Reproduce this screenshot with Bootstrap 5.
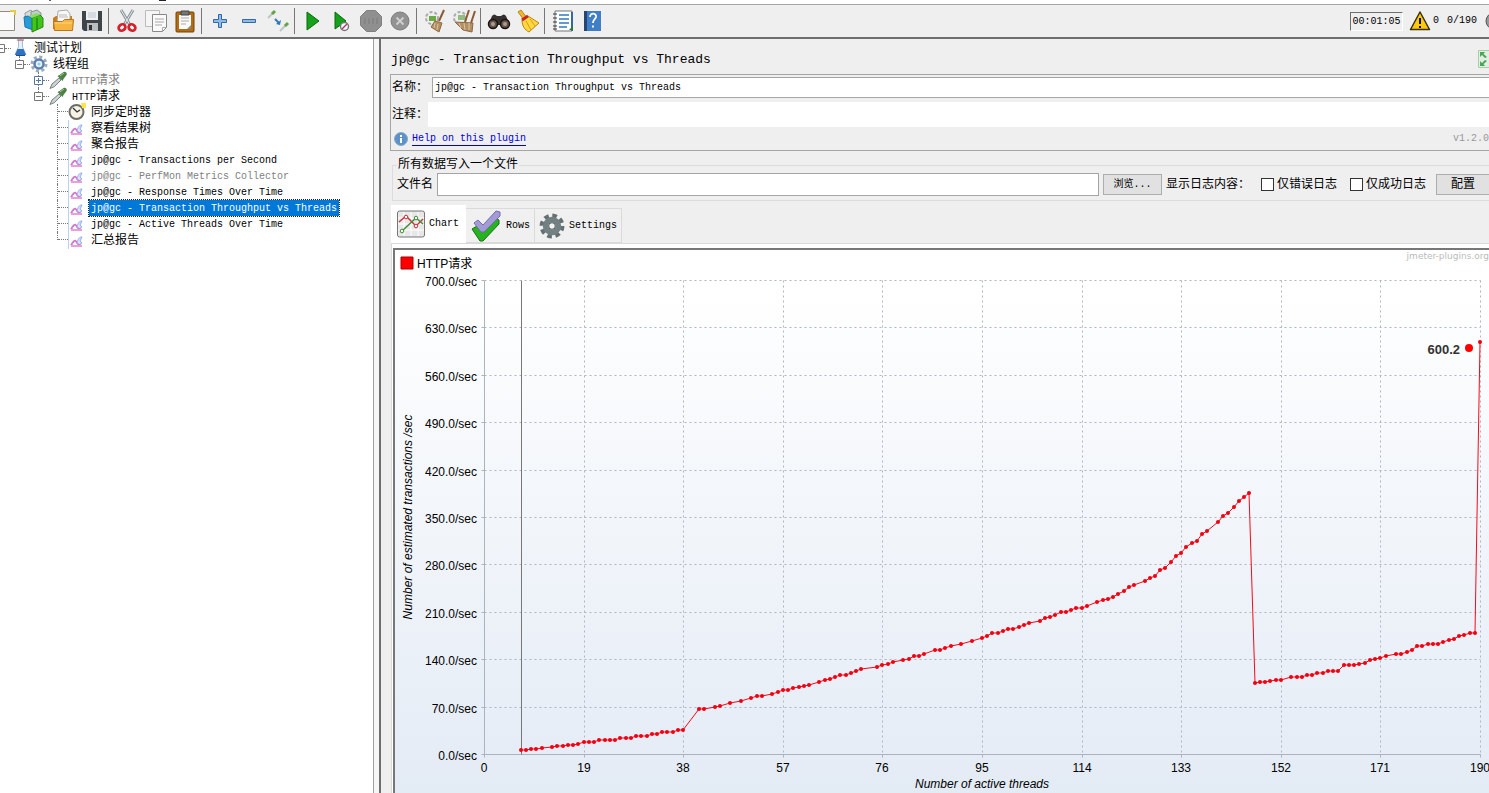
<!DOCTYPE html>
<html lang="zh-CN">
<head>
<meta charset="utf-8">
<meta name="viewport" content="width=device-width, initial-scale=1">
<title>Apache JMeter</title>
<link href="https://cdn.jsdelivr.net/npm/bootstrap@5.3.0/dist/css/bootstrap.min.css" rel="stylesheet">
<script src="https://cdn.jsdelivr.net/npm/bootstrap@5.3.0/dist/js/bootstrap.bundle.min.js"></script>
<style>
  :root { --face:#efefef; --edge:#a5a5a5; --dark:#6e6e6e; }
  body { font-family:"Liberation Mono","Noto Sans CJK SC",monospace; font-size:12px; line-height:16px; color:#000; background:var(--face); }
  .mono { font-size:10px; }
  .menu-edge { height:4px; background:#fff; }
  .menu-edge svg { display:block; }
  .toolbar { height:35px; background:var(--face); border-top:1px solid var(--edge); border-bottom:2px solid var(--dark); }
  .tools { margin-left:-10px; }
  .tool { width:29px; height:30px; padding:0; border:0; background:none; display:flex; align-items:center; justify-content:center; }
  .tool svg { width:24px; height:24px; }
  .divider { width:1px; height:26px; margin:0 3px 0 2px; background:#777; }
  .clock { width:53px; height:19px; line-height:18px; text-align:center; border:1px solid; border-color:#6e6e6e #fff #fff #6e6e6e; }
  .side { width:374px; flex:none; background:#fff; border-right:1px solid #a0a0a0; overflow:hidden; }
  .tree, .tree ul { list-style:none; margin:0; padding:0; }
  .tree { margin:1px 0 0 -4px; }
  .tree ul { padding-left:19px; }
  .node { display:flex; height:16px; align-items:center; white-space:nowrap; }
  .node > svg { width:18px; height:18px; flex:none; margin:-1px 3px -1px 0; }
  .node .caption { padding:0 2px; height:16px; line-height:18px; }
  .node .caption.chosen { background:#0078d7; color:#fff; outline:1px dotted #222; }
  .off { color:#808080; }
  .knob { width:9px; height:16px; padding:0; border:0; background:none; display:flex; flex-direction:column; align-items:center; flex:none; }
  .knob i { width:0; height:3px; flex:1; }
  .knob i.on { border-left:1px dotted #777; }
  .knob svg { width:9px; height:9px; flex:none; }
  .stub { width:6px; border-top:1px dotted #777; flex:none; }
  .twig { width:11px; height:16px; margin-left:4px; border-left:1px dotted #777; flex:none; }
  .twig::before { content:""; display:block; height:8px; border-bottom:1px dotted #777; }
  .twig.last { height:8px; align-self:flex-start; }
  .split { width:5px; flex:none; background:#f6f6f6; }
  .work { border-left:2px solid var(--dark); min-width:0; overflow:hidden; }
  .heading { font-size:13px; line-height:20px; font-weight:400; margin:3px 0 0 2px; }
  .plain { border:1px solid #a5a5a5; border-radius:0; background:#fff; padding:0 2px; height:21px; font-size:10px; min-width:0; color:#000; }
  .about { margin-left:9px; border:1px solid var(--edge); border-right:0; padding:2px 0 0 1px; height:77px; }
  .about .plain { border-right:0; }
  .about .remark { border-color:#fff; height:25px; }
  .help { color:#0000e0; text-decoration:none; border-bottom:1px solid #0000e0; line-height:13px; }
  .version { white-space:nowrap; color:#999; }
  .store { margin:6px 0 0 11px; padding:0; min-width:0; height:44px; border:1px solid #dcdcdc; border-right:0; }
  .store legend { float:none; width:auto; font-size:12px; line-height:16px; height:16px; margin:0 0 0 4px; padding:0 1px; }
  .store .plain { height:23px; }
  .store label.opt { margin:0 10px 0 3px; }
  .key { height:21px; padding:0; border:1px solid #adadad; background:#e1e1e1; border-radius:0; color:#000; line-height:16px; }
  .key.browse { width:59px; font-size:10px; }
  .key.config { width:53px; border-right:0; font-size:12px; }
  .tick { appearance:none; width:13px; height:13px; margin:0 0 0 3px; border:1px solid #333; background:#fff; border-radius:0; }
  .tick:checked { background:#0078d7; }
  .tabs { margin:5px 0 0 10px; border:0; flex-wrap:nowrap; align-items:flex-end; height:37px; }
  .tabs .nav-link { border:1px solid #dadada; border-left:0; border-radius:0; padding:0 4px; height:35px; font-size:10px; color:#000; display:flex; align-items:center; gap:4px; background:#f0f0f0; }
  .tabs .nav-link.active { height:38px; background:#fff; border-color:#fff; border-left:1px solid #fff; padding-left:5px; padding-right:6px; color:#000; }
  .pane { margin-left:10px; border-top:1px solid #dadada; border-left:1px solid #dadada; background:#fff; padding:4px 0 0 1px; min-height:0; }
  .plot { border-top:2px solid #777; border-left:2px solid #777; background:linear-gradient(#fff,#fff 6%,#e3ebf5); overflow:hidden; min-height:300px; }
  .plot svg { display:block; width:100%; height:100%; position:absolute; inset:0; font-family:"Liberation Sans","Noto Sans CJK SC",sans-serif; font-size:12px; }
</style>
</head>
<body class="d-flex flex-column vh-100 overflow-hidden">

<svg class="d-none" aria-hidden="true">
  <symbol id="i-plus" viewBox="0 0 9 9"><path d="M.5.5h8v8h-8zM2 4.500h5M4.500 2v5" fill="#fff" stroke="#56779c"/></symbol>
  <symbol id="i-minus" viewBox="0 0 9 9"><path d="M.5.5h8v8h-8zM2 4.500h5" fill="#fff" stroke="#777"/></symbol>
  <symbol id="i-dropper" viewBox="0 0 18 18"><path d="M1 17.500 3 13l7-6 2 2-6.500 6.500z" fill="#c9d3d2" stroke="#75827d"/><path d="m8.500 5 5 5 1-2 3-4c1-2-1-4-3-3l-4 3z" fill="#4c8246"/><path d="m11 5 4-3" stroke="#a1c995"/></symbol>
  <symbol id="i-result" viewBox="0 0 18 18"><path d="M.5 1v17" stroke="#b9d1ee"/><path d="M3 14.500c2-4 4-6 5-4s2 3 5 4" fill="none" stroke="#d27ad2" stroke-width="1.800"/><path d="M3 15h11" stroke="#e8a0dd" stroke-width="2"/><path d="M9 12c1-4 2-6 5-6l-2 4 2 2-2 1" fill="#d8e4fb" stroke="#91acec"/></symbol>
  <symbol id="i-gear" viewBox="0 0 24 24"><circle cx="12" cy="12" r="9.500" fill="none" stroke="#657073" stroke-width="4" stroke-dasharray="4.200 3.260"/><circle cx="12" cy="12" r="6" fill="none" stroke="#738083" stroke-width="5"/><circle cx="12" cy="12" r="3" fill="#f2f4f4" stroke="#4d5759"/></symbol>
</svg>

<div class="menu-edge flex-shrink-0"><svg width="200" height="2" aria-hidden="true"><path d="M49 0h2v1h-2z" fill="#559"/><path d="M159 0h7v1h-7z" fill="#222"/></svg></div>

<header class="toolbar d-flex align-items-center flex-shrink-0">
  <div class="tools d-flex align-items-center" role="toolbar">
    <button class="tool" aria-label="新建"><svg viewBox="0 0 24 24"><path d="M4.500 2.500h17v19h-17z" fill="#fbfbfb" stroke="#8f8c80"/><path d="M17 2h5v4" fill="none" stroke="#e7ca45" stroke-width="2"/></svg></button>
    <button class="tool" aria-label="模板"><svg viewBox="0 0 24 24"><path d="m3 4 6-3 2 4-2 12-5-2z" fill="#d6dcdc" stroke="#969d9d"/><path d="m9 3 6-2 4 3v8H9z" fill="#c2cccc" stroke="#879292"/><path d="m2 8 4-1 5 3v11l-8-3z" fill="#269bd7" stroke="#1678ad"/><path d="m10 9 8-3 3 3v9l-11 5z" fill="#42c51b" stroke="#278714"/><path d="m10 9-3-2 8-3 3 2z" fill="#8bdd5e"/><path d="M15 9v11" stroke="#249a16" stroke-width="2"/></svg></button>
    <button class="tool" aria-label="打开"><svg viewBox="0 0 24 24"><path d="M2 20V9l3-2h16v13z" fill="#c97d16"/><path d="m7 2 9-1 3 4v9H6z" fill="#f8f8f8" stroke="#aaa"/><path d="M8 6h8M8 8h9" stroke="#bbb"/><path d="M2.500 12.500h9l2-2h9l-1 11h-18z" fill="#f6b541" stroke="#b97518"/><path d="M4 14h17" stroke="#ffd684"/></svg></button>
    <button class="tool" aria-label="保存"><svg viewBox="0 0 24 24"><path d="M2 2h20v20H4l-2-2z" fill="#3f444b"/><path d="M6 2h12v9H6z" fill="#eef1f4"/><path d="M8 4h8M8 6h8M8 8h8" stroke="#bcc4cc"/><path d="M7 14h11v8H7z" fill="#b9bdc2"/><path d="M9 16h3v5H9z" fill="#333"/></svg></button>
    <span class="divider"></span>
    <button class="tool" aria-label="剪切"><svg viewBox="0 0 24 24"><path d="m6 1 9 15M18 1 9 16" stroke="#87949c" stroke-width="3"/><path d="m6 1 9 15M18 1 9 16" stroke="#e4e8eb"/><ellipse cx="7" cy="18.500" rx="3.500" ry="3" transform="rotate(-35 7 18.500)" fill="#fff" stroke="#d6202c" stroke-width="2.800"/><ellipse cx="17" cy="18.500" rx="3.500" ry="3" transform="rotate(35 17 18.500)" fill="#fff" stroke="#d6202c" stroke-width="2.800"/></svg></button>
    <button class="tool" aria-label="复制"><svg viewBox="0 0 24 24"><path d="M1.500 1.500h14v16h-14z" fill="#f5f5f5" stroke="#bbb"/><path d="M8.500 5.500h14v13l-4 4h-10z" fill="#fafafa" stroke="#888"/><path d="M11 10h9M11 13h9M11 16h7M18.500 22v-3.500H22" fill="none" stroke="#a8a8a8"/></svg></button>
    <button class="tool" aria-label="粘贴"><svg viewBox="0 0 24 24"><rect x="3" y="3" width="18" height="20" rx="1" fill="#b26d14" stroke="#754508"/><path d="M6 6h12v14H6z" fill="#fafafa"/><path d="M8 2h8v4H8z" fill="#777" stroke="#444"/><path d="M8 9h8M8 12h8M8 15h5" stroke="#aaa"/><path d="m14 20 4-4v4z" fill="#888"/></svg></button>
    <span class="divider"></span>
    <button class="tool" aria-label="展开"><svg viewBox="0 0 24 24"><path d="M10.500 5.500h3v5h5v3h-5v5h-3v-5h-5v-3h5z" fill="#8ebce6" stroke="#3469a8"/></svg></button>
    <button class="tool" aria-label="收起"><svg viewBox="0 0 24 24"><path d="M5.500 10.500h13v3h-13z" fill="#8ebce6" stroke="#3469a8"/></svg></button>
    <button class="tool" aria-label="切换"><svg viewBox="0 0 24 24"><path d="m2 9 6-6M14 22l6-6" stroke="#bdc7c2" stroke-width="2"/><path d="m6 5 3-3M19 17l3-3" stroke="#62a447" stroke-width="3"/><path d="m9 10 4 4" stroke="#2c79ba" stroke-width="2"/><path d="m15 11-1 5-4-1z" fill="#2c79ba"/></svg></button>
    <span class="divider"></span>
    <button class="tool" aria-label="启动"><svg viewBox="0 0 24 24"><path d="m6 3 12 9L6 21z" fill="#16a11a" stroke="#0b6b10"/></svg></button>
    <button class="tool" aria-label="不停顿启动"><svg viewBox="0 0 24 24"><path d="m5 3 11 9-11 8z" fill="#16a11a" stroke="#0b6b10"/><circle cx="14.500" cy="17.500" r="4" fill="#fff" stroke="#777" stroke-width="1.500"/><path d="m12 20 5-5" stroke="#c22c65" stroke-width="1.500"/></svg></button>
    <button class="tool" aria-label="停止"><svg viewBox="0 0 24 24"><path d="M7.500 1.500h9l6 6v9l-6 6h-9l-6-6v-9z" fill="#8f8f8f" stroke="#808080"/><path d="M5 9h14v6H5z" fill="#858585"/><path d="M8 9v6M12 9v6M16 9v6" stroke="#9c9c9c"/></svg></button>
    <button class="tool" aria-label="关闭"><svg viewBox="0 0 24 24"><circle cx="12" cy="12" r="9" fill="#929292" stroke="#7c7c7c"/><path d="m8.500 8.500 7 7m0-7-7 7" stroke="#d0d0d0" stroke-width="1.800"/></svg></button>
    <span class="divider"></span>
    <button class="tool" aria-label="清除"><svg viewBox="0 0 24 24"><circle cx="9" cy="9" r="6" fill="#eee" stroke="#aaa" stroke-width="2" stroke-dasharray="3 2"/><path d="M6 7h7v5H6z" fill="#69ac43"/><path d="m21 1-5 11" stroke="#8d5a35" stroke-width="2"/><path d="m12 12 7 2-3 9-8-5z" fill="#b29066" stroke="#8d6846"/><path d="m12 14-1 5m4-4-1 6" stroke="#dfc49d"/></svg></button>
    <button class="tool" aria-label="清除全部"><svg viewBox="0 0 24 24"><circle cx="8" cy="9" r="6" fill="#eee" stroke="#aaa" stroke-width="2" stroke-dasharray="3 2"/><path d="M6 6h7v5H6z" fill="#93bd80"/><path d="m17 1-4 12M23 2l-4 12" stroke="#8d5a35" stroke-width="2"/><path d="m3 13 18 1-1 9-9-2z" fill="#b29066" stroke="#8d6846"/><path d="m7 14 2 5m3-5 1 7m4-7v7" stroke="#dfc49d"/></svg></button>
    <span class="divider"></span>
    <button class="tool" aria-label="查找"><svg viewBox="0 0 24 24"><path d="M5 7q2-3 5 0h4q3-3 5 0l4 9H1z" fill="#36302e"/><circle cx="6" cy="15" r="4.500" fill="#655248" stroke="#17120f" stroke-width="1.500"/><circle cx="18" cy="15" r="4.500" fill="#655248" stroke="#17120f" stroke-width="1.500"/><circle cx="6" cy="15" r="2" fill="#b09b8b"/><circle cx="18" cy="15" r="2" fill="#b09b8b"/></svg></button>
    <button class="tool" aria-label="重置查找"><svg viewBox="0 0 24 24"><path d="m2 3 3-2 6 8-3 2z" fill="#eeb92e" stroke="#b98412"/><path d="m6 11 6-4 11 7-10 9c-4-2-7-6-7-12z" fill="#ffd83f" stroke="#b98412"/><path d="m6 11 6-4" stroke="#c62525" stroke-width="3"/><path d="m10 12 5 9m-1-11 5 7" stroke="#d59d1a"/></svg></button>
    <span class="divider"></span>
    <button class="tool" aria-label="函数助手"><svg viewBox="0 0 24 24"><path d="M4 2h17v20H4z" fill="#fff" stroke="#777"/><path d="M8 6h10M8 10h10M8 14h10M8 18h8" stroke="#2f79c4" stroke-width="1.500"/><path d="M2 5h4M2 9h4M2 13h4M2 17h4M2 20h4" stroke="#333"/><path d="M21 3v19" stroke="#3168a2" stroke-width="2"/><path d="m18 21 4-4v4z" fill="#247a2e"/></svg></button>
    <button class="tool" aria-label="帮助"><svg viewBox="0 0 24 24"><path d="M4 2h17v20H4z" fill="#407fc7"/><path d="M4 2h3v20H4z" fill="#27466f"/><path d="M10 8c0-5 7-4 6 0-1 3-3 2-3 6M13 16.500v2" fill="none" stroke="#fff" stroke-width="1.800"/></svg></button>
  </div>
  <div class="d-flex align-items-center ms-auto mono">
    <div class="clock">00:01:05</div>
    <svg class="ms-1" width="26" height="24" viewBox="0 0 26 24" aria-hidden="true"><path d="M13 3 3.500 20.500h19z" fill="#ffc90e" stroke="#3b3200" stroke-width="1.500" stroke-linejoin="round"/><path d="M13 9v6M13 17v2" stroke="#111" stroke-width="2"/></svg>
    <span class="me-2">0</span><span class="me-2">0/190</span>
    <svg width="4" height="18" viewBox="0 0 4 18" aria-hidden="true"><circle cx="9" cy="9" r="8" fill="#999" stroke="#555"/></svg>
  </div>
</header>

<div class="d-flex flex-grow-1" style="min-height:0">
  <nav class="side">
    <ul class="tree">
      <li>
        <div class="node"><button class="knob" aria-label="收起"><i></i><svg><use href="#i-minus"/></svg><i></i></button><span class="stub"></span>
          <svg viewBox="0 0 18 18"><path d="M7.500 1v7L4 15.500h11L11.500 8V1z" fill="#e5f0fa" stroke="#a5bed6"/><path d="M6.500 10h6l2.500 6H4z" fill="#2d72c4"/><path d="M6 1h7" stroke="#b95050"/><path d="M5 16.500h9" stroke="#254e86"/></svg><span class="caption">测试计划</span></div>
        <ul><li>
          <div class="node"><button class="knob" aria-label="收起"><i class="on"></i><svg><use href="#i-minus"/></svg><i></i></button><span class="stub"></span>
            <svg viewBox="0 0 18 18"><circle cx="9" cy="9" r="7" fill="none" stroke="#9aabbd" stroke-width="3" stroke-dasharray="3 2.500"/><circle cx="9" cy="9" r="4.500" fill="#e3f2ff" stroke="#5d7fa8" stroke-width="2.500"/><circle cx="9" cy="9" r="1.500" fill="#9ccbf2"/></svg><span class="caption">线程组</span></div>
          <ul>
            <li><div class="node off"><button class="knob" aria-label="展开"><i class="on"></i><svg><use href="#i-plus"/></svg><i class="on"></i></button><span class="stub"></span><svg><use href="#i-dropper"/></svg><span class="caption"><span class="mono">HTTP</span>请求</span></div></li>
            <li>
              <div class="node"><button class="knob" aria-label="收起"><i class="on"></i><svg><use href="#i-minus"/></svg><i></i></button><span class="stub"></span><svg><use href="#i-dropper"/></svg><span class="caption"><span class="mono">HTTP</span>请求</span></div>
              <ul>
                <li class="node"><span class="twig"></span><svg viewBox="0 0 18 18"><circle cx="8.500" cy="9" r="7" fill="#f6f2e4" stroke="#6d6d68" stroke-width="2"/><path d="m5 5 4 4 3-2" fill="none" stroke="#333" stroke-width="1.300"/><path d="M13 0h5v5h-4z" fill="#ffe646"/></svg><span class="caption">同步定时器</span></li>
                <li class="node"><span class="twig"></span><svg><use href="#i-result"/></svg><span class="caption">察看结果树</span></li>
                <li class="node"><span class="twig"></span><svg><use href="#i-result"/></svg><span class="caption">聚合报告</span></li>
                <li class="node"><span class="twig"></span><svg><use href="#i-result"/></svg><span class="caption mono">jp@gc - Transactions per Second</span></li>
                <li class="node off"><span class="twig"></span><svg><use href="#i-result"/></svg><span class="caption mono">jp@gc - PerfMon Metrics Collector</span></li>
                <li class="node"><span class="twig"></span><svg><use href="#i-result"/></svg><span class="caption mono">jp@gc - Response Times Over Time</span></li>
                <li class="node"><span class="twig"></span><svg><use href="#i-result"/></svg><span class="caption mono chosen">jp@gc - Transaction Throughput vs Threads</span></li>
                <li class="node"><span class="twig"></span><svg><use href="#i-result"/></svg><span class="caption mono">jp@gc - Active Threads Over Time</span></li>
                <li class="node"><span class="twig last"></span><svg><use href="#i-result"/></svg><span class="caption">汇总报告</span></li>
              </ul>
            </li>
          </ul>
        </li></ul>
      </li>
    </ul>
  </nav>
  <div class="split"></div>

  <main class="work flex-grow-1 d-flex flex-column">
    <div class="d-flex align-items-center justify-content-between ps-2 pt-2 pb-1">
      <h1 class="heading">jp@gc - Transaction Throughput vs Threads</h1>
      <svg width="11" height="18" viewBox="0 0 11 18" aria-hidden="true"><path d="M.5.5H12v17H.5z" fill="#e1efe1" stroke="#a6cfa6"/><path d="M2 2h5L5.500 4 9 7 7 8 4 5 2 7zM2 16h5l-1.500-2L9 11l-2-1-3 3-2-2z" fill="#4ca35a"/></svg>
    </div>

    <section class="about flex-shrink-0">
      <div class="d-flex align-items-center"><label for="name">名称：</label><input id="name" class="plain flex-grow-1 ms-1" value="jp@gc - Transaction Throughput vs Threads"></div>
      <div class="d-flex align-items-center mt-1"><label for="remark">注释：</label><input id="remark" class="plain remark flex-grow-1"></div>
      <div class="d-flex align-items-center mono pt-1">
        <svg class="me-1" width="16" height="16" viewBox="-1 0 16 16" aria-hidden="true"><circle cx="8" cy="8" r="6.500" fill="#5e91c8" stroke="#8aa8c6"/><path d="M8 4v2M8 7v5" stroke="#fff" stroke-width="2"/></svg>
        <a class="help" href="#">Help on this plugin</a><span class="version ms-auto">v1.2.0</span>
      </div>
    </section>

    <fieldset class="store flex-shrink-0">
      <legend>所有数据写入一个文件</legend>
      <div class="d-flex align-items-center text-nowrap">
        <label for="file" class="px-1">文件名</label><input id="file" class="plain flex-grow-1">
        <button class="key browse mx-1">浏览...</button>
        <span class="me-2">显示日志内容：</span>
        <input id="errs" type="checkbox" class="tick"><label for="errs" class="opt">仅错误日志</label>
        <input id="oks" type="checkbox" class="tick"><label for="oks" class="opt">仅成功日志</label>
        <button class="key config">配置</button>
      </div>
    </fieldset>

    <div class="nav tabs flex-shrink-0" role="tablist">
      <button class="nav-link active" role="tab" aria-selected="true"><svg width="28" height="28" viewBox="0 0 28 28"><rect x=".5" y="1" width="27" height="26" rx="2" fill="#e7e7e7" stroke="#777"/><path d="M7 2v24M14 2v24M21 2v24M1 8h26M1 14h26M1 20h26" stroke="#fff"/><path d="m2 12 7-6 10 10 7-7" fill="none" stroke="#c8323c" stroke-width="1.400"/><path d="m5 21 14-13 7 6" fill="none" stroke="#428c36" stroke-width="1.400"/><g fill="#fff"><g stroke="#c8323c"><circle cx="9" cy="7" r="1.800"/><circle cx="19" cy="16" r="1.800"/></g><g stroke="#428c36"><circle cx="5" cy="21" r="1.800"/><circle cx="19" cy="8" r="1.800"/></g></g></svg>Chart</button>
      <button class="nav-link" role="tab" aria-selected="false"><svg width="32" height="32" viewBox="0 0 32 32"><path d="m2 19 5-3 5 5L25 8l4 2v4L13 31h-3z" fill="#27b31f" stroke="#177014"/><path d="m4 13 4-3 5 5L26 1l4 1v4L14 22h-3z" fill="#a39bd6" stroke="#756bad"/></svg>Rows</button>
      <button class="nav-link" role="tab" aria-selected="false"><svg width="26" height="26"><use href="#i-gear"/></svg>Settings</button>
    </div>

    <div class="pane flex-grow-1 d-flex">
      <div class="plot flex-grow-1 position-relative"><svg id="chart" role="img" aria-label="Transaction Throughput vs Threads"></svg></div>
    </div>
  </main>
</div>

<script>
  // [active threads, estimated transactions per second]
  const samples = [[7,6],[8,6],[9,8],[10,8],[11,9],[13,11],[14,12],[15,12],[16,14],[17,14],[18,15],[19,17],[20,17],[21,18],[22,20],[23,20],[24,21],[25,21],[26,23],[27,24],[28,24],[29,26],[30,27],[31,27],[32,29],[33,30],[34,32],[35,33],[36,33],[37,35],[38,36],
    [41,66],[42,67],[44,70],[45,71],[47,76],[49,79],[51,82],[52,85],[53,86],[55,89],[56,91],[57,94],[58,95],[59,97],[60,99],[61,101],[62,102],[64,107],[65,110],[66,111],[67,114],[68,116],[69,117],[70,120],[71,122],[72,125],[75,129],[76,132],[77,133],[78,136],[80,139],[81,141],[82,144],[83,145],[84,148],[86,153],[87,154],[88,157],[89,159],[91,163],[93,167],[95,172],[96,175],[97,178],[98,179],[99,182],[100,184],[101,185],[102,188],[103,191],[104,193],[106,197],[107,201],[108,203],[109,206],[110,209],[111,210],[112,212],[113,215],[114,216],[115,219],
    [117,224],[118,227],[119,229],[120,232],[121,237],[122,241],[123,246],[124,250],[126,256],[127,260],[128,263],[129,271],[130,275],[131,284],[132,293],[133,297],[134,306],[135,311],[136,315],[137,325],[138,330],[140,343],[141,352],[142,356],[143,365],[144,374],[145,379],[146,386],
    [147,105],[148,107],[149,107],[150,108],[151,110],[152,110],[154,113],[155,114],[156,114],[157,117],[158,117],[159,119],[160,120],[161,122],[162,123],[163,123],[164,131],[165,132],[166,132],[167,133],[168,135],[169,139],[170,141],[171,142],[172,145],[174,147],[175,148],[176,151],[177,154],[178,159],[179,159],[180,162],[181,163],[182,163],[183,166],[184,169],[185,170],[186,175],[187,176],[188,178],[189,179],[190,608]];
  const svg = document.getElementById('chart');
  function draw() {
    const W = svg.parentNode.clientWidth, H = svg.parentNode.clientHeight;
    const L = 89, R = W - 9, T = 30, B = H - 39;
    const X = v => Math.round(L + v * (R - L) / 190), Y = v => Math.round(B - v * (B - T) / 700);
    const line = (x1, y1, x2, y2, c, d) => `<path d="M${x1 + .5} ${y1 + .5}L${x2 + .5} ${y2 + .5}" stroke="${c}" ${d ? 'stroke-dasharray="2 3"' : ''}/>`;
    const text = (x, y, s, a) => `<text x="${x}" y="${y}" ${a || ''}>${s}</text>`;
    let out = '';
    for (let i = 0; i <= 10; i++) {
      const y = Y(i * 70), x = X(i * 19);
      if (i) out += line(L, y, R, y, '#b0b6c0', true) + line(x, T, x, B, '#b0b6c0', true);
      out += line(L - 3, y, L, y, '#a9b4bc') + line(x, B, x, B + 3, '#a9b4bc');
      out += text(L - 7, y + 6, (i * 70).toFixed(1) + '/sec', 'text-anchor="end"') + text(x, B + 18, i * 19, 'text-anchor="middle"');
    }
    out += line(L, T, L, B, '#a9b4bc') + line(L, B, R, B, '#a9b4bc') + line(X(7), T, X(7), B, '#777');
    out += `<polyline fill="none" stroke="#f80818" points="${samples.map(p => X(p[0]) + ',' + Y(p[1])).join(' ')}"/>`;
    out += samples.map(p => `<circle cx="${X(p[0])}" cy="${Y(p[1])}" r="2" fill="#f00010"/>`).join('');
    out += '<path d="M6 7h12v12H6z" fill="red" stroke="#a00"/>' + text(22, 18, 'HTTP请求');
    out += text(W, 9, 'jmeter-plugins.org', 'text-anchor="end" fill="#bbb" font-size="9" font-family="DejaVu Sans"');
    out += text(R - 20, Y(600) + 6, '600.2', 'text-anchor="end" fill="#333" font-size="13" font-weight="bold"') + `<circle cx="${R - 11}" cy="${Y(600)}" r="4" fill="red"/>`;
    out += text((L + R) / 2, H - 5, 'Number of active threads', 'text-anchor="middle" font-style="italic"');
    const m = (T + B) / 2;
    out += text(17, m, 'Number of estimated transactions /sec', `text-anchor="middle" font-style="italic" transform="rotate(-90 17 ${m})"`);
    svg.innerHTML = out;
  }
  draw();
  addEventListener('resize', draw);
</script>
</body>
</html>
